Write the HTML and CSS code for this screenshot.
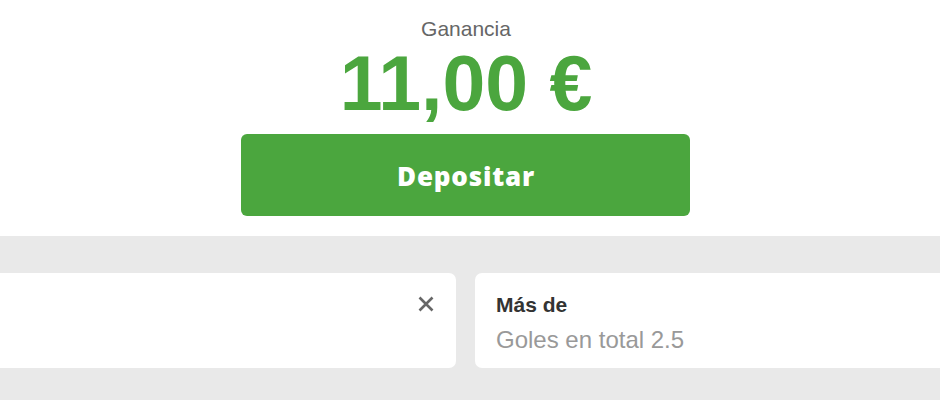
FILE: index.html
```html
<!DOCTYPE html>
<html lang="es">
<head>
<meta charset="utf-8">
<link rel="stylesheet" href="styles.css">
</head>
<body>
<div class="page">
  <section class="summary">
    <div class="label">Ganancia</div>
    <div class="amount">11,00 €</div>
    <button class="deposit">Depositar</button>
  </section>
  <section class="bets">
    <div class="row">
      <div class="card card-left">
        <button class="close" aria-label="Cerrar">
          <svg width="16" height="16" viewBox="0 0 16 16"><path d="M1.5 1.5 L14.5 14.5 M14.5 1.5 L1.5 14.5" stroke="#666" stroke-width="2.6" stroke-linecap="butt"/></svg>
        </button>
      </div>
      <div class="card card-right">
        <div class="pick">Más de</div>
        <div class="market">Goles en total 2.5</div>
      </div>
    </div>
  </section>
</div>
</body>
</html>
```
FILE: styles.css
```css
html, body {
  margin: 0;
  padding: 0;
  background: #ffffff;
}
.page {
  width: 940px;
  height: 400px;
  overflow: hidden;
  font-family: "Liberation Sans", Arial, sans-serif;
}
.summary {
  height: 236px;
  display: flex;
  flex-direction: column;
  align-items: center;
  box-sizing: border-box;
  padding-top: 17px;
  padding-right: 10px;
  background: #fff;
}
.label {
  font-size: 21px;
  line-height: 24px;
  color: #666;
  margin-left: 2px;
}
.amount {
  font-size: 77px;
  font-weight: 700;
  line-height: 80px;
  color: #4ba63e;
  margin-top: 2px;
  margin-left: 2px;
}
.deposit {
  margin-top: 11px;
  width: 449px;
  height: 82px;
  border: 0;
  border-radius: 6px;
  background: #4ba63e;
  color: #fff;
  font-family: "Open Sans", sans-serif;
  font-weight: 800;
  font-size: 26px;
  letter-spacing: 0.8px;
  padding: 1px 0 0 1px;
  margin-left: 1px;
}
.bets {
  height: 164px;
  background: #e9e9e9;
  padding-top: 37px;
  box-sizing: border-box;
  overflow: hidden;
}
.row {
  display: flex;
  gap: 19px;
  margin-left: -20px;
}
.card {
  flex: 0 0 476px;
  height: 95px;
  background: #fff;
  border-radius: 7px;
  box-sizing: border-box;
}
.card-left {
  display: flex;
  justify-content: flex-end;
  align-items: flex-start;
  padding: 23px 22px 0 0;
}
.close {
  border: 0;
  background: transparent;
  padding: 0;
  width: 16px;
  height: 16px;
  display: block;
}
.close svg { display: block; }
.card-right {
  padding: 20px 0 0 21px;
}
.pick {
  font-size: 21px;
  font-weight: 700;
  color: #333;
  line-height: 24px;
}
.market {
  font-size: 24px;
  color: #999;
  line-height: 28px;
  margin-top: 9px;
}
```
